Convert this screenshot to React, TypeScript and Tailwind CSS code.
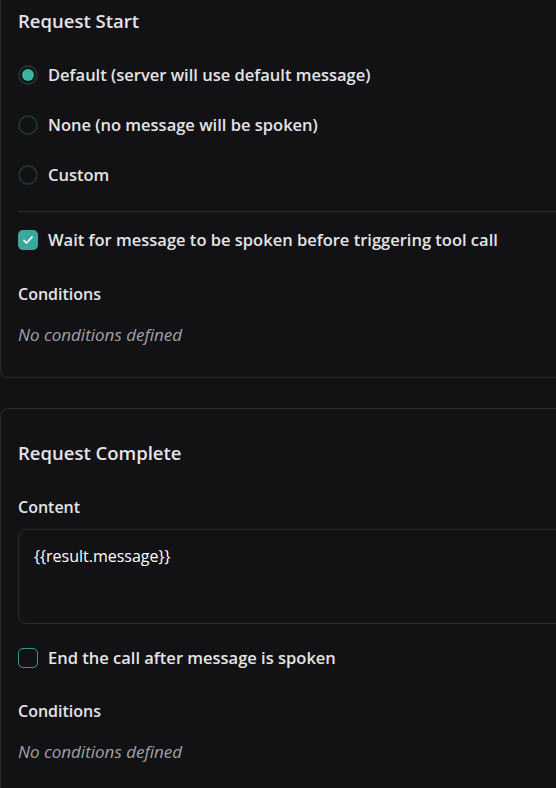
import React from "react";

function Radio({ checked, label }: { checked?: boolean; label: string }) {
  return (
    <label className="flex items-center gap-[10px] h-[20px]">
      <span className="w-[20px] h-[20px] rounded-full border-2 border-[#1d3532] flex items-center justify-center">
        {checked && <span className="w-[12px] h-[12px] rounded-full bg-[#3bb3a1]" />}
      </span>
      <span className="text-[16.5px] font-semibold text-[#e4e4e7]">{label}</span>
    </label>
  );
}

function Checkbox({ checked, label }: { checked?: boolean; label: string }) {
  return (
    <label className="flex items-center gap-[10px] h-[20px]">
      {checked ? (
        <span className="w-[20px] h-[20px] rounded-[5px] bg-[#3aa99b] flex items-center justify-center">
          <svg width="12" height="12" viewBox="0 0 24 24" fill="none" stroke="#fff" strokeWidth="3.5" strokeLinecap="round" strokeLinejoin="round">
            <path d="M4 13l5 5L20 6" />
          </svg>
        </span>
      ) : (
        <span className="w-[20px] h-[20px] rounded-[5px] border-[1.5px] border-[#2b9c8e]" />
      )}
      <span className="text-[16.5px] font-semibold text-[#e4e4e7]">{label}</span>
    </label>
  );
}

function Conditions() {
  return (
    <div>
      <div className="text-[16px] font-semibold text-[#e4e4e7] leading-[20px]">Conditions</div>
      <div className="mt-[21px] text-[17px] italic text-[#a1a1aa] leading-[20px]">No conditions defined</div>
    </div>
  );
}

export default function App() {
  return (
    <div className="w-[556px] h-[788px] overflow-hidden bg-[#121214]" style={{ fontFamily: '"Open Sans", sans-serif' }}>
      <div className="w-[600px]">
        <section className="-mt-[25px] border border-[#2c2c30] rounded-lg pl-[17px] pt-[35px] pb-[32px]">
          <h2 className="text-[18.5px] font-semibold text-[#e4e4e7] leading-[20px]">Request Start</h2>
          <div className="mt-[34px] flex flex-col gap-[30px]">
            <Radio checked label="Default (server will use default message)" />
            <Radio label="None (no message will be spoken)" />
            <Radio label="Custom" />
          </div>
          <div className="mt-[26px] border-t border-[#2c2c30]" />
          <div className="mt-[18px]">
            <Checkbox checked label="Wait for message to be spoken before triggering tool call" />
          </div>
          <div className="mt-[34px]">
            <Conditions />
          </div>
        </section>

        <section className="mt-[30px] border border-[#2c2c30] rounded-lg pl-[17px] pt-[34px]">
          <h2 className="text-[18.5px] font-semibold text-[#e4e4e7] leading-[20px]">Request Complete</h2>
          <div className="mt-[34px] text-[16px] font-semibold text-[#e4e4e7] leading-[20px]">Content</div>
          <div className="mt-[12px] h-[95px] border border-[#2c2c30] rounded-lg px-[15px] pt-[14px] text-[16px] text-white leading-[24px]">
            {"{{result.message}}"}
          </div>
          <div className="mt-[24px]">
            <Checkbox label="End the call after message is spoken" />
          </div>
          <div className="mt-[33px]">
            <Conditions />
          </div>
          <div className="h-[60px]" />
        </section>
      </div>
    </div>
  );
}
